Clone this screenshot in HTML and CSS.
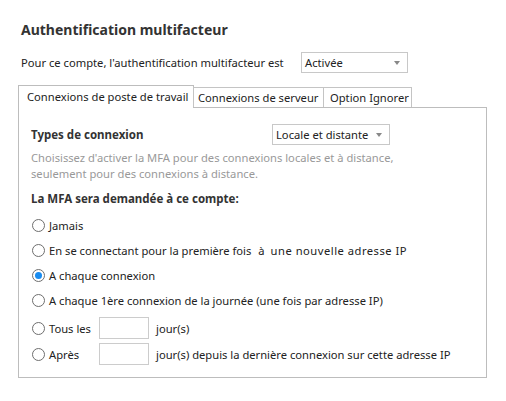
FILE: index.html
```html
<!DOCTYPE html>
<html lang="fr">
<head>
<meta charset="utf-8">
<link rel="stylesheet" href="styles.css">
</head>
<body>
<div class="card">
  <h1 class="title">Authentification multifacteur</h1>
  <div class="row status-row">
    <span class="label">Pour ce compte, l'authentification multifacteur est</span>
    <div class="select select-status"><span>Activée</span><i class="caret"></i></div>
  </div>
  <div class="tabs">
    <div class="tab tab-1 active">Connexions de poste de travail</div>
    <div class="tab tab-2">Connexions de serveur</div>
    <div class="tab tab-3">Option Ignorer</div>
  </div>
  <div class="panel">
    <div class="row type-row">
      <span class="bold type-label">Types de connexion</span>
      <div class="select select-type"><span>Locale et distante</span><i class="caret"></i></div>
    </div>
    <p class="desc">Choisissez d'activer la MFA pour des connexions locales et à distance,<br>seulement pour des connexions à distance.</p>
    <div class="bold heading">La MFA sera demandée à ce compte:</div>
    <div class="options">
      <div class="opt"><span class="radio"></span><span>Jamais</span></div>
      <div class="opt"><span class="radio"></span><span>En se connectant pour la première fois</span><span class="gap">à</span><span class="wide">une nouvelle adresse IP</span></div>
      <div class="opt"><span class="radio checked"></span><span>A chaque connexion</span></div>
      <div class="opt"><span class="radio"></span><span>A chaque 1ère connexion de la journée (une fois par adresse IP)</span></div>
      <div class="opt opt-input"><span class="radio"></span><span class="opt-label">Tous les</span><span class="box"></span><span>jour(s)</span></div>
      <div class="opt opt-input"><span class="radio"></span><span class="opt-label">Après</span><span class="box"></span><span>jour(s) depuis la dernière connexion sur cette adresse IP</span></div>
    </div>
  </div>
</div>
</body>
</html>
```
FILE: styles.css
```css
html, body {
  margin: 0;
  padding: 0;
  background: #ffffff;
}
body {
  font-family: "Noto Sans", "Open Sans", sans-serif;
  font-size: 11.2px;
  color: #222;
}
.card {
  width: 506px;
  height: 401px;
  box-sizing: border-box;
  padding: 20px 20px 0 18px;
}
.title {
  margin: 0 0 0 3px;
  font-size: 14px;
  line-height: 20px;
  font-weight: bold;
  color: #333;
}
.row {
  display: flex;
  align-items: center;
}
.status-row {
  margin-top: 12px;
  padding-left: 3px;
  height: 21px;
}
.status-row .label {
  width: 280px;
  white-space: nowrap;
}
.select {
  position: relative;
  box-sizing: border-box;
  height: 21px;
  border: 1px solid #c8c8c8;
  background: #fff;
  display: flex;
  align-items: center;
  padding-left: 3px;
  white-space: nowrap;
}
.select-status { width: 107px; }
.select-type { width: 118px; }
.caret {
  position: absolute;
  right: 7px;
  top: 8px;
  width: 0;
  height: 0;
  border-left: 3.5px solid transparent;
  border-right: 3.5px solid transparent;
  border-top: 4px solid #888;
}
.tabs {
  display: flex;
  align-items: flex-end;
  margin-top: 12px;
  height: 22px;
  position: relative;
  z-index: 1;
}
.tab {
  box-sizing: border-box;
  height: 20px;
  border: 1px solid #c4c4c4;
  border-bottom: none;
  display: flex;
  align-items: center;
  white-space: nowrap;
  background: #fff;
  margin-left: -1px;
}
.tab-1 { width: 176px; padding-left: 8px; margin-left: 0; }
.tab-2 { width: 131px; padding-left: 4px; }
.tab-3 { width: 89px; padding-left: 6px; }
.tab.active {
  height: 23px;
  margin-bottom: -1px;
  padding-bottom: 2px;
  border-color: #bdbdbd;
}
.panel {
  box-sizing: border-box;
  width: 469px;
  height: 271px;
  border: 1px solid #bdbdbd;
  padding: 16px 11px 0 12px;
}
.bold {
  font-weight: bold;
  font-size: 11.5px;
  color: #333;
}
.type-label {
  width: 241px;
}
.desc {
  margin: 5px 0 0 0;
  line-height: 16px;
  color: #999;
  white-space: nowrap;
}
.heading {
  margin-top: 9px;
  line-height: 16px;
}
.options {
  margin-top: 6px;
  display: flex;
  flex-direction: column;
}
.opt {
  display: flex;
  align-items: center;
  height: 25px;
  white-space: nowrap;
}
.gap {
  margin: 0 6px 0 7px;
}
.wide {
  letter-spacing: 0.5px;
}
.opt-input {
  height: 26px;
}
.opt:nth-child(5) { margin-top: 2px; }
.radio {
  box-sizing: border-box;
  width: 13px;
  height: 13px;
  border: 1px solid #6e6e6e;
  border-radius: 50%;
  margin: 0 4px 0 1px;
  display: flex;
  align-items: center;
  justify-content: center;
  flex: none;
}
.radio.checked::after {
  content: "";
  width: 7px;
  height: 7px;
  border-radius: 50%;
  background: #1a8cf0;
}
.opt-label {
  width: 50px;
}
.box {
  box-sizing: border-box;
  width: 50px;
  height: 22px;
  border: 1px solid #ccc;
  margin-right: 7px;
}
```
